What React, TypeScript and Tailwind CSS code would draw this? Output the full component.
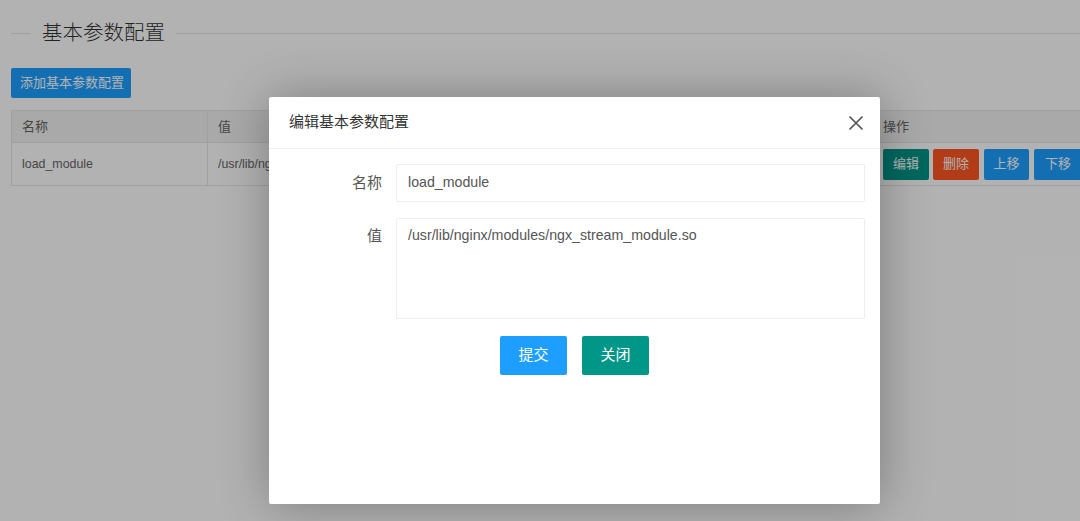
import React from "react";

const font = { fontFamily: '"Liberation Sans", "Noto Sans CJK SC", sans-serif' };

export default function App() {
  return (
    <div className="relative w-[1080px] h-[521px] overflow-hidden bg-white text-[#666]" style={font}>
      {/* page */}
      <div className="pt-[20px] pl-[11px]">
        <div className="flex items-center h-[26px]">
          <div className="w-[20px] h-px bg-[#e6e6e6]" />
          <div className="px-[11px] text-[20.5px] leading-[26px] text-[#333] font-light">基本参数配置</div>
          <div className="flex-1 h-px bg-[#e6e6e6]" />
        </div>
        <button className="mt-[22px] h-[30px] w-[120px] rounded-[2px] bg-[#1E9FFF] text-white text-[13px] flex items-center justify-center pl-[2px]">
          添加基本参数配置
        </button>
        <div className="mt-[12px] w-[1200px] border-y border-l border-[#e6e6e6] text-[13px]">
          <div className="flex h-[32px] bg-[#f2f2f2] border-b border-[#e6e6e6]">
            <div className="w-[196px] border-r border-[#e6e6e6] pl-[10px] flex items-center">名称</div>
            <div className="w-[665px] border-r border-[#e6e6e6] pl-[10px] flex items-center">值</div>
            <div className="flex-1 pl-[10px] flex items-center">操作</div>
          </div>
          <div className="flex h-[42px]">
            <div className="w-[196px] border-r border-[#e6e6e6] pl-[10px] flex items-center text-[12.4px]">load_module</div>
            <div className="w-[665px] border-r border-[#e6e6e6] pl-[10px] flex items-center text-[12.4px]">/usr/lib/nginx/modules/ngx_stream_module.so</div>
            <div className="flex-1 pl-[10px] flex items-center gap-[4px] text-white text-[13px]">
              <span className="w-[46px] h-[31px] rounded-[2px] bg-[#009688] flex items-center justify-center">编辑</span>
              <span className="w-[46px] h-[31px] rounded-[2px] bg-[#FF5722] flex items-center justify-center">删除</span>
              <span className="ml-[1px] w-[45px] h-[31px] rounded-[2px] bg-[#1E9FFF] flex items-center justify-center">上移</span>
              <span className="ml-[1px] w-[60px] h-[31px] rounded-[2px] bg-[#1E9FFF] flex items-center justify-center pr-[12px]">下移</span>
            </div>
          </div>
        </div>
      </div>

      {/* shade */}
      <div className="absolute inset-0 bg-black/30" />

      {/* modal */}
      <div className="absolute left-[269px] top-[97px] w-[611px] h-[407px] bg-white rounded-[2px] shadow-[1px_1px_50px_rgba(0,0,0,0.3)] flex flex-col">
        <div className="h-[52px] flex items-center justify-between pl-[20px] pr-[17px] border-b border-[#f0f0f0]">
          <span className="text-[15px] text-[#333]">编辑基本参数配置</span>
          <svg width="14" height="14" viewBox="0 0 14 14" className="text-[#555]">
            <path d="M1 1 L13 13 M13 1 L1 13" stroke="currentColor" strokeWidth="1.7" strokeLinecap="round" />
          </svg>
        </div>
        <div className="pt-[15px] pr-[15px]">
          <div className="flex items-center">
            <div className="w-[127px] pr-[14px] text-right text-[15px] text-[#555]">名称</div>
            <div className="flex-1 h-[38px] border border-[#eee] rounded-[2px] flex items-center pl-[11px] text-[14.2px] text-[#555]">load_module</div>
          </div>
          <div className="flex items-start mt-[16px]">
            <div className="w-[127px] pr-[14px] text-right text-[15px] text-[#555] pt-[7px]">值</div>
            <div className="flex-1 h-[101px] border border-[#eee] rounded-[2px] pl-[11px] pt-[6px] text-[14.2px] text-[#555]">
              /usr/lib/nginx/modules/ngx_stream_module.so
            </div>
          </div>
          <div className="flex justify-center gap-[15px] mt-[17px] pl-[15px]">
            <button className="w-[67px] h-[39px] rounded-[2px] bg-[#1E9FFF] text-white text-[15px]">提交</button>
            <button className="w-[67px] h-[39px] rounded-[2px] bg-[#009688] text-white text-[15px]">关闭</button>
          </div>
        </div>
      </div>
    </div>
  );
}
